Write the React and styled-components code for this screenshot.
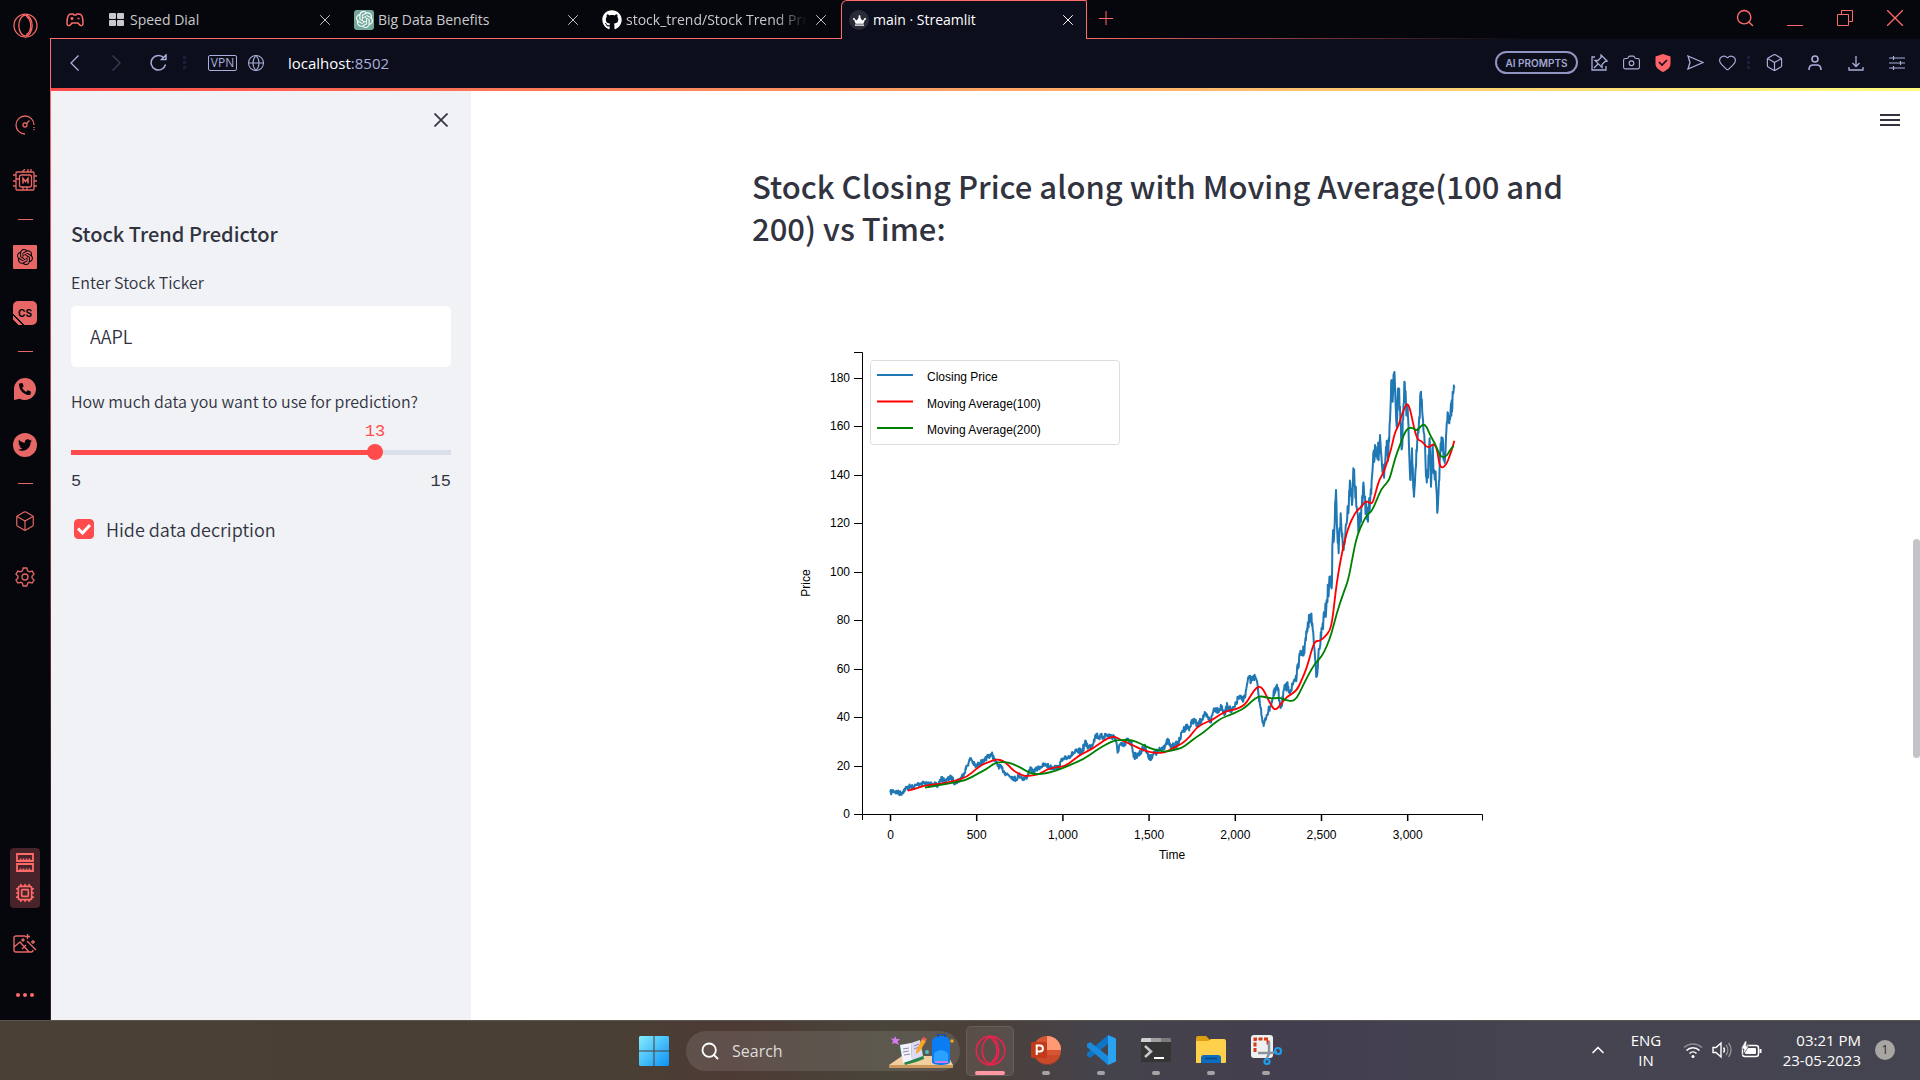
import React, { useState } from "react";
import styled, { createGlobalStyle, css } from "styled-components";
import { Box, Camera, Heart, Cpu, Globe, X, Search, ChevronUp } from "lucide-react";
import { FaGithub, FaTwitter, FaCrown, FaPhoneAlt } from "react-icons/fa";
import { SiOpenai } from "react-icons/si";

const coral = "#ff6b68";
const railCoral = "#e66765";
const lilac = "#a9aedb";
const ink = "#31333f";
const accent = "#ff4b4b";
const shellFont = '"Open Sans", "Noto Sans", sans-serif';
const pageFont = '"Noto Sans CJK JP", "Noto Sans", sans-serif';
const digitFont = '"Liberation Mono", monospace';

const GlobalStyle = createGlobalStyle`
  *, *::before, *::after { box-sizing: border-box; }
  body { margin: 0; background: #06070c; font-family: ${shellFont}; overflow: hidden; }
  button { padding: 0; border: 0; background: none; color: inherit; font: inherit; }
  h1, h2, p { margin: 0; }
  svg { flex: none; }
`;

const Desktop = styled.div`
  height: 100vh;
  display: grid;
  grid-template-rows: 1fr 60px;
`;

const Browser = styled.div`
  display: grid;
  grid-template-columns: 50px 1fr;
  min-height: 0;
  background: #06070c;
`;

/* ---------- left rail ---------- */

const Rail = styled.nav`
  display: flex;
  flex-direction: column;
  align-items: center;
  padding: 10px 0 2px;
  color: ${railCoral};
`;

const Logo = styled.button`
  display: flex;
  align-items: center;
  height: 30px;
  margin-bottom: 57px;
`;

const RailButton = styled.button`
  display: grid;
  place-items: center;
  width: 40px;
  height: ${(p) => p.$height || 56}px;
`;

const RailDash = styled.span`
  width: 15px;
  height: 20px;
  background: linear-gradient(${railCoral}, ${railCoral}) center / 15px 1px no-repeat;
`;

const RailTile = styled.span`
  display: grid;
  place-items: center;
  width: 24px;
  height: 24px;
  border-radius: ${(p) => p.$radius}px;
  background: ${railCoral};
  color: #06070c;
  font: 700 10px/24px Inter, sans-serif;
`;

const FoldedTile = styled(RailTile)`
  background: linear-gradient(45deg, #06070c 0 4px, ${railCoral} 4px 7px, #06070c 7px 8px, ${railCoral} 8px);
`;

const Monitor = styled.div`
  display: flex;
  flex-direction: column;
  align-items: center;
  justify-content: space-around;
  width: 30px;
  height: 60px;
  margin: auto 0 8px;
  border-radius: 4px;
  background: #48232a;
  color: ${coral};
`;

/* ---------- browser chrome ---------- */

const Window = styled.div`
  display: grid;
  grid-template-rows: 39px 49px 1fr;
  min-width: 0;
  min-height: 0;
`;

const TabStrip = styled.div`
  display: flex;
  align-items: stretch;
  padding-left: 11px;
  color: #c9c9cd;
  background: linear-gradient(90deg, ${coral} 55%, transparent 79%) bottom / 100% 1px no-repeat;
`;

const GameButton = styled.button`
  display: grid;
  place-items: center;
  width: 28px;
  margin-right: 8px;
  color: ${coral};
`;

const TabBox = styled.div`
  display: flex;
  align-items: center;
  gap: 4px;
  width: 248px;
  padding: 0 10px 0 9px;
  font-size: 14px;
  ${(p) =>
    p.$active &&
    css`
      width: 246px;
      padding: 0 8px 0 7px;
      color: #fff;
      background: #0c0e1b;
      border: 1px solid ${coral};
      border-bottom: 0;
      border-radius: 6px 2px 0 0;
    `}
`;

const TabIcon = styled.span`
  display: grid;
  place-items: center;
  flex: none;
  width: 20px;
  height: 20px;
  border-radius: ${(p) => p.$radius || 0};
  background: ${(p) => p.$bg || "transparent"};
  color: #fff;
`;

const TabName = styled.span`
  flex: 1;
  min-width: 0;
  white-space: nowrap;
  line-height: 20px;
  ${(p) => p.$fade && css`mask-image: linear-gradient(90deg, #000 82%, transparent);`}
`;

const IconButton = styled.button`
  display: grid;
  place-items: center;
  flex: none;
  width: ${(p) => p.$size || 20}px;
  height: ${(p) => p.$size || 20}px;
  color: ${(p) => p.$color || "inherit"};
`;

const WindowControls = styled.div`
  display: flex;
  gap: 30px;
  align-items: center;
  margin-left: auto;
  padding: 0 15px 3px 0;
  color: ${coral};
`;

const NewTab = styled.button`
  display: grid;
  place-items: center;
  width: 38px;
  padding-bottom: 3px;
  color: ${coral};
`;

const Toolbar = styled.div`
  display: flex;
  align-items: center;
  padding: 0 13px 2px;
  background: #0c0e1b;
  border-left: 1px solid ${coral};
  color: ${lilac};
`;

const NavButtons = styled.div`
  display: flex;
  gap: 22px;
`;

const Dots = styled.span`
  width: 3px;
  height: 14px;
  margin: ${(p) => p.$margin};
  background: repeating-linear-gradient(#18203c 0 3px, transparent 3px 5px);
`;

const Vpn = styled.button`
  width: 29px;
  height: 16px;
  margin-right: 9px;
  border: 1px solid ${lilac};
  border-radius: 2px;
  font-size: 12px;
  line-height: 14px;
`;

const Address = styled.input`
  width: 40px;
  flex: 1;
  border: 0;
  outline: 0;
  background: transparent;
`;

const AddressText = styled.label`
  display: flex;
  flex: 1;
  margin-left: 22px;
  color: #fff;
  font-size: 15px;
  line-height: 20px;
  span { color: ${lilac}; }
`;

const Prompts = styled.button`
  width: 83px;
  height: 23px;
  margin-right: 11px;
  border: 2px solid #8f94c0;
  border-radius: 12px;
  color: #a2a6d0;
  font: 600 10px/18px Inter, sans-serif;
`;

const ActionGroup = styled.div`
  display: flex;
  gap: ${(p) => p.$gap}px;
`;

/* ---------- page ---------- */

const Page = styled.div`
  display: grid;
  grid-template-columns: 420px 1fr;
  grid-template-rows: 3px 1fr;
  min-height: 0;
  border-left: 1px solid;
  border-image: linear-gradient(${coral}, #3a1c22 75%) 1;
  background: #fff;
  color: ${ink};
  font-family: ${pageFont};
`;

const Decoration = styled.div`
  grid-column: 1 / -1;
  background: linear-gradient(90deg, ${accent}, #fffd80);
`;

const Side = styled.aside`
  display: flex;
  flex-direction: column;
  padding: 17px 20px;
  background: #f0f2f6;
`;

const CloseRow = styled.div`
  display: flex;
  justify-content: flex-end;
  height: 24px;
  align-items: center;
`;

const SideTitle = styled.h2`
  margin-top: 88px;
  font-size: 20px;
  font-weight: 500;
  line-height: 28px;
`;

const FieldLabel = styled.label`
  margin-top: 21px;
  font-size: 16px;
  font-weight: 350;
  line-height: 26px;
`;

const TextField = styled.input`
  width: 100%;
  height: 61px;
  margin-top: 11px;
  padding: 0 19px 2px;
  border: 0;
  border-radius: 5px;
  outline: 0;
  background: #fff;
  color: ${ink};
  font: 350 18px ${pageFont};
`;

const SliderValue = styled.output`
  width: 40px;
  margin-top: 8px;
  transform: translateX(-50%);
  color: ${accent};
  text-align: center;
  font: 400 17px/20px ${digitFont};
`;

const Slider = styled.input`
  appearance: none;
  height: 16px;
  margin: 2px -8px 0;
  background: linear-gradient(90deg, ${accent} 80%, #dae0ea 80%) center / calc(100% - 16px) 5px no-repeat;
  &::-webkit-slider-thumb {
    appearance: none;
    width: 16px;
    height: 16px;
    border-radius: 50%;
    background: ${accent};
  }
`;

const Range = styled.div`
  display: flex;
  justify-content: space-between;
  margin-top: 12px;
  font: 400 17px/20px ${digitFont};
`;

const CheckRow = styled.label`
  display: flex;
  align-items: center;
  gap: 12px;
  margin: 25px 0 0 3px;
  font-size: 18px;
  font-weight: 350;
  line-height: 24px;
`;

const Check = styled.input`
  appearance: none;
  width: 20px;
  height: 20px;
  margin: 0;
  border-radius: 4px;
  border: 1px solid ${accent};
  &:checked {
    background: ${accent} url("data:image/svg+xml,%3Csvg xmlns='http://www.w3.org/2000/svg' viewBox='0 0 20 20'%3E%3Cpath d='M4 9.5l4.5 4.5L16 6' fill='none' stroke='%23fff' stroke-width='3'/%3E%3C/svg%3E") center / 20px no-repeat;
  }
`;

const Main = styled.main`
  display: grid;
  grid-template-columns: 1fr 7px;
  min-width: 0;
`;

const MainBody = styled.div`
  padding: 18px 12px 0 18px;
`;

const MenuRow = styled.div`
  display: flex;
  justify-content: flex-end;
`;

const Block = styled.section`
  max-width: 886px;
  margin: 34px auto 0;
`;

const Heading = styled.h1`
  padding-right: 20px;
  font-size: 31px;
  font-weight: 500;
  line-height: 42px;
`;

const Chart = styled.svg`
  display: block;
  margin-top: 91px;
  font-family: "Liberation Sans", Arial, sans-serif;
  font-size: 12px;
`;

const ScrollThumb = styled.div`
  align-self: start;
  height: 219px;
  margin-top: 448px;
  border-radius: 4px;
  background: #c3c4c8;
`;

/* ---------- taskbar ---------- */

const Taskbar = styled.footer`
  display: grid;
  grid-template-columns: 1fr auto 1fr;
  align-items: center;
  border-top: 1px solid #5c5650;
  background: linear-gradient(90deg, #4a4036 0, #4a3f34 33%, #4d3a35 38%, #49453a 46%, #4b4039 51%, #45434b 57%, #433e4f 68%, #454450 80%, #444450 100%);
  color: #fff;
`;

const Apps = styled.div`
  grid-column: 2;
  display: flex;
  align-items: center;
  padding-left: 12px;
`;

const StartButton = styled.button`
  display: grid;
  width: 30px;
  margin-right: 17px;
`;

const SearchBox = styled.label`
  display: flex;
  align-items: center;
  width: 274px;
  height: 40px;
  padding: 0 6px 0 14px;
  gap: 12px;
  border-radius: 20px;
  background: #ffffff1c;
  margin-right: 6px;
`;

const SearchInput = styled.input`
  flex: 1;
  width: 40px;
  padding: 0;
  border: 0;
  outline: 0;
  background: transparent;
  color: #fff;
  font: 16px ${shellFont};
  &::placeholder { color: #dedbd8; opacity: 1; }
`;

const AppButton = styled.button`
  display: grid;
  grid-template-rows: 39px 4px;
  row-gap: 1px;
  justify-items: center;
  align-items: center;
  width: ${(p) => (p.$active ? 48 : 55)}px;
  height: 50px;
  padding: 5px 0 0;
  margin-right: ${(p) => (p.$active ? 4 : 0)}px;
  border-radius: 5px;
  ${(p) => p.$active && css`background: #ffffff14; box-shadow: inset 0 0 0 1px #ffffff18;`}
  &::after {
    content: "";
    width: ${(p) => (p.$active ? 30 : 8)}px;
    height: 4px;
    border-radius: 2px;
    background: ${(p) => (p.$active ? "#ff98a4" : "#a5a3a6")};
  }
`;

const Tray = styled.div`
  display: flex;
  align-items: center;
  justify-content: flex-end;
  padding: 0 25px 2px 0;
  font-size: 15px;
  line-height: 20px;
`;

const Language = styled.button`
  width: 50px;
  margin: 0 12px 0 13px;
  text-align: center;
`;

const TrayIcons = styled.div`
  display: flex;
  gap: 9px;
`;

const Clock = styled.time`
  width: 99px;
  text-align: right;
`;

const Badge = styled.span`
  width: 20px;
  height: 20px;
  margin-left: 14px;
  border-radius: 50%;
  background: #a8a6a2;
  color: #2b2b2b;
  font-size: 12px;
  text-align: center;
`;

/* ---------- drawings ---------- */

const Line = ({ w = 24, h = w, vb = "0 0 24 24", sw = 1.3, children }) => (
  <svg width={w} height={h} viewBox={vb} fill="none" stroke="currentColor" strokeWidth={sw}>{children}</svg>
);

const OperaMark = ({ color, size = 25 }) => (
  <svg width={size} height={size} viewBox="0 0 30 30" fill="none" stroke={color} strokeWidth="1.500">
    <circle cx="15" cy="15" r="13.800" />
    <ellipse cx="15" cy="15" rx="8" ry="12.500" />
    <path d="M16 4c7 4 7 18 0 22" />
  </svg>
);

const Pad = () => (
  <Line w={18} h={14} vb="0 0 18 14" sw={1.5}>
    <path d="M5 1h2l1 1h2l1-1h2c3 0 4 4 4 9 0 4-3 3-5 0H6c-2 3-5 4-5 0 0-5 1-9 4-9z" />
    <path d="M4.500 5.500h3M6 4v3M11.500 5.500h2" />
  </Line>
);

const SpeedDial = () => (
  <svg width="15" height="13" viewBox="0 0 15 13" fill="#c9c9cd">
    <rect width="7" height="6" rx="1" /><rect x="8" width="7" height="6" rx="1" />
    <rect y="7" width="7" height="6" rx="1" /><rect x="8" y="7" width="7" height="6" rx="1" />
  </svg>
);

const GaugeIcon = () => (
  <Line w={20} vb="0 0 20 20">
    <path d="M10 19a9 9 0 1 1 9-9" />
    <path d="M19 12v1M19 14v1" />
    <circle cx="10" cy="10" r="2" /><path d="M11.500 8.500l3-3" />
  </Line>
);

const ChipIcon = () => (
  <Line>
    <rect x="3" y="3" width="18" height="18" rx="1" />
    <rect x="6.500" y="6" width="12" height="12" rx="2" />
    <path d="M10 14.500v-5l2.500 3 2.500-3v5" strokeWidth="1.600" />
    <path d="M0 6h3M0 12h3M0 17h3M21 7h3M21 12h3M21 17h3M9 3l3-3M15 3V0M18 3V0M10 18v3M14 18v3M6.500 10H3" />
  </Line>
);

const GearIcon = () => (
  <Line w={20} vb="0 0 20 20">
    <circle cx="10" cy="10" r="3" />
    <path d="M8.200 1h3.600l.8 2.900 1.800 1 2.800-.8 1.800 3.100-2 2v1.800l2 2-1.800 3.100-2.800-.8-1.800 1-.8 2.700H8.200l-.8-2.700-1.800-1-2.800.8L1 13l2-2V9.200l-2-2 1.800-3.100 2.800.8 1.800-1z" />
  </Line>
);

const WhatsIcon = () => (
  <svg width="24" height="24" viewBox="0 0 24 24">
    <path d="M12 1a11 11 0 1 1-5.200 20.700L1 23V12A11 11 0 0 1 12 1z" fill={railCoral} />
    <g transform="translate(6 6)" color="#06070c"><FaPhoneAlt size={12} /></g>
  </svg>
);

const RamIcon = () => (
  <Line w={18} h={20} vb="0 0 18 20" sw={1.8}>
    <path d="M1 1h16v7H1zM1 11h16v7H1zM4.500 8V5.500M7.500 8V5.500M10.500 8V5.500M13.500 8V5.500M4.500 18v-2.500M7.500 18v-2.500M10.500 18v-2.500M13.500 18v-2.500" />
  </Line>
);

const PictureIcon = () => (
  <Line w={24} h={20} vb="0 0 24 20" sw={1.4}>
    <path d="M12 2H3a2 2 0 0 0-2 2v12a2 2 0 0 0 2 2h15a2 2 0 0 0 2-2M1 13l6-5 9 10M9 15l4-4M14 7l9 9M14.500 0v5M12 2.500h5M20 6v4M18 8h4" />
    <circle cx="10" cy="6" r="1" fill="currentColor" />
  </Line>
);

const PinIcon = () => (
  <Line w={18} vb="0 0 18 18" sw={1.3}>
    <path d="M5 3H2v13h14v-4M11 1l6 6-2 .5-3 3 0 3-7-7h3l3-3zM8 10l-4 4" />
  </Line>
);

const ShieldIcon = () => (
  <svg width="16" height="18" viewBox="0 0 16 18">
    <path d="M8 0l7.500 2.500V10c0 4-4.500 6.500-7.500 8-3-1.500-7.500-4-7.500-8V2.500z" fill="#ff6468" />
    <path d="M4 8l3 3 5-5" fill="none" stroke="#0c0e1b" strokeWidth="1.600" />
  </svg>
);

const WindowsLogo = () => (
  <svg width="30" height="30" viewBox="0 0 30 30">
    <defs><linearGradient id="win" x1="0" y1="0" x2="1" y2="1"><stop stopColor="#84edff" /><stop offset="1" stopColor="#0c91f5" /></linearGradient></defs>
    <path d="M1 0h13.500v14.500H0V1zM15.500 0H29l1 1v13.500H15.500zM0 15.500h14.500V30H1l-1-1zM15.500 15.500H30V29l-1 1H15.500z" fill="url(#win)" />
  </svg>
);

const SchoolArt = () => (
  <svg width="65" height="34" viewBox="0 0 65 34">
    <path d="M0 31l13-9h46l5 9z" fill="#f3cfa0" /><path d="M0 31h64v3H0z" fill="#c9975c" />
    <path d="M43 8c0-8 18-8 18 0v20c0 4-18 4-18 0z" fill="#0b7df2" /><path d="M49 3V0h7v3" fill="none" stroke="#1450b0" strokeWidth="2" />
    <path d="M45 20c3-5 11-5 14 0v8H45z" fill="#2ba1ff" /><path d="M46 28h13" stroke="#c77cf0" strokeWidth="2" />
    <path d="M10 13l11-2 4-1 7-3 3 18-8 3-11 3z" fill="#25864a" /><path d="M11 11l11-2 1 17-9 3z" fill="#f4f2ff" /><path d="M22 9l9-3 3 16-11 4z" fill="#dedaf5" />
    <path d="M14 15l6-1M14 18l6-1M15 21l6-1M25 12l5-2M25 15l5-2" stroke="#8d88a6" />
    <path d="M27 17l6-12 4 2-6 10-4 3z" fill="#f8a528" /><path d="M33 5l1-2 4 2-1 2z" fill="#f35a55" />
    <path d="M6 2l1.500 3L11 5 8.500 7.500 10 11 6 9 3 10l1-3-2-3 3 1z" fill="#d77af2" />
    <circle cx="38" cy="18" r="2" fill="#4bc0c8" /><circle cx="63" cy="7" r="1.800" fill="#f0a81c" />
  </svg>
);

const PowerPoint = () => (
  <svg width="30" height="30" viewBox="0 0 30 30">
    <circle cx="16" cy="15" r="14" fill="#d65532" /><path d="M16 1a14 14 0 0 1 14 14H16z" fill="#ff9a75" /><path d="M3 20h27a14 14 0 0 1-27 0z" fill="#bd3d20" opacity=".5" />
    <rect y="7" width="16" height="16" rx="1.500" fill="#c13b1b" />
    <path d="M5.700 20v-9.500h3.200a3 3 0 0 1 0 6H6" fill="none" stroke="#fff" strokeWidth="2" />
  </svg>
);

const CodeIcon = () => (
  <svg width="30" height="30" viewBox="0 0 30 30">
    <path d="M22 0l8 3.500v23L22 30z" fill="#29a3f0" />
    <path d="M22 0v9L4 23l-3-2v-3z" fill="#0f74c4" /><path d="M22 30v-9L4 7 1 9v3z" fill="#1a8bdc" />
  </svg>
);

const TerminalIcon = () => (
  <svg width="30" height="24" viewBox="0 0 30 24">
    <rect width="30" height="24" rx="1.500" fill="#353535" /><path d="M0 1.500A1.500 1.500 0 0 1 1.500 0H10v4H0z" fill="#d0d0d0" />
    <path d="M10 0h10v4H10z" fill="#a0a0a0" /><path d="M20 0h8.500A1.500 1.500 0 0 1 30 1.500V4H20z" fill="#7b7b7b" />
    <path d="M4 8l6 5.500L4 19" fill="none" stroke="#c9c9c9" strokeWidth="2.500" /><path d="M13 20h10" stroke="#fff" strokeWidth="2" />
  </svg>
);

const FolderIcon = () => (
  <svg width="30" height="28" viewBox="0 0 30 28">
    <path d="M0 2a2 2 0 0 1 2-2h8l4 4v6H0z" fill="#e09f12" /><path d="M0 5h12l3-2h13a2 2 0 0 1 2 2v21a1 1 0 0 1-1 1H0z" fill="#ffd04c" />
    <path d="M5 27v-5a3 3 0 0 1 3-3h14a3 3 0 0 1 3 3v5z" fill="#0d6cc0" /><path d="M9 22.500h12" stroke="#0a4580" strokeWidth="1.500" />
  </svg>
);

const SnipIcon = () => (
  <svg width="32" height="30" viewBox="0 0 32 30">
    <rect x="1" width="22" height="23" rx="3" fill="#eef0f2" /><path d="M5 17V4h13v6" fill="none" stroke="#d43c16" strokeWidth="3" strokeDasharray="4 1.500" />
    <path d="M19 7v12l-3 6M8 18h12l7-1" stroke="#8b949c" strokeWidth="2.500" fill="none" />
    <circle cx="28" cy="16" r="3" fill="none" stroke="#209be8" strokeWidth="2.200" /><circle cx="17" cy="26.500" r="2.500" fill="none" stroke="#209be8" strokeWidth="2.200" />
  </svg>
);

/* ---------- chart data, three units to a pixel ---------- */

const closeEarly = [151,398,160,392,170,397,183,400,195,388,205,380,220,382,235,372,250,368,262,374,280,372,293,378,303,356,315,364,333,352,345,368,362,356,372,340,380,320,387,305,393,295,400,310,408,320,420,308,433,305,440,292,455,282,463,298,472,315,485,325,495,338,505,345,515,350,528,358,537,345,553,358,562,348,570,328,580,335,590,328,600,320,618,314,630,322,645,322,655,325,662,305,672,298,685,290,700,280,712,275,725,275,737,248,745,262,755,258,762,238,768,225,780,232,790,230,800,224,812,230,822,228,828,245,833,278,838,255,850,258,862,240,875,250,882,288,895,285,905,270,917,262,927,297,940,282,955,275,968,262,975,255,985,243,992,262,1005,258,1020,240,1027,212,1040,200,1050,202,1058,180,1065,185,1073,198,1085,178,1093,165,1103,172,1112,185,1122,145,1135,150,1145,138,1153,165,1162,135,1175,155,1185,140,1195,112,1205,118,1215,112,1220,80,1228,48,1233,65,1240,48,1250,62,1255,100,1262,145,1271,198,1280,165,1290,140,1300,110,1312,82,1318,120];
const closeLate = [4,1100,10,1055,25,1040,35,1050,42,1020,50,1010,55,970,65,935,72,935,80,880,88,835,93,830,97,850,101,900,105,950,110,1010,115,950,120,920,128,850,135,830,140,780,147,740,152,710,155,745,158,600,163,570,168,450,172,580,176,640,182,520,187,580,191,630,197,560,204,510,211,430,216,495,220,385,225,440,230,500,235,575,240,520,243,545,249,445,254,470,259,520,265,515,270,490,275,420,280,340,290,350,297,330,300,285,305,360,311,400,318,320,325,340,330,240,335,120,338,185,342,100,346,170,350,260,355,145,360,200,366,325,373,125,378,190,384,230,388,350,392,420,396,325,402,470,408,380,413,290,418,230,423,155,428,230,434,310,438,410,443,415,449,295,453,440,457,330,462,390,468,430,473,510,478,420,482,310,487,300,493,360,498,290,504,220,508,250,513,190,516,215,518,155,523,145];
const ma100Early = [203,392,230,385,255,376,300,372,340,364,380,352,410,325,430,312,450,305,470,297,490,303,505,315,520,332,545,346,565,349,600,342,620,328,645,322,675,319,700,300,720,285,760,265,790,242,812,231,825,230,840,238,860,248,880,256,900,267,930,277,950,279,975,278,1000,263,1025,252,1050,230,1070,202,1095,188,1115,181,1130,170,1150,158,1170,150,1185,149,1205,140,1220,128,1235,102,1250,82,1260,80,1270,88,1285,120,1297,142,1305,149,1315,143];
const ma100Late = [0,1095,20,1070,50,1053,65,1020,80,985,95,930,105,903,120,903,135,890,150,872,157,840,163,790,170,730,180,670,190,620,200,580,210,550,220,530,230,512,245,500,257,482,265,487,277,492,285,465,297,420,310,400,320,370,333,330,345,275,355,260,365,225,375,200,382,190,390,205,400,255,412,300,425,302,440,322,450,320,462,310,472,330,478,375,487,385,500,372,510,345,517,325,523,302];
const ma200Early = [255,383,300,375,340,368,380,360,410,343,440,327,460,312,475,307,500,306,520,313,545,324,565,338,590,343,620,340,660,328,690,315,730,298,770,270,800,252,825,241,850,240,875,240,900,250,930,265,960,273,980,275,1000,270,1025,264,1045,250,1070,230,1090,218,1120,192,1145,174,1170,165,1195,154,1215,143,1235,124,1255,109,1270,110,1290,115,1305,115];
const ma200Late = [0,1073,15,1080,37,1084,50,1075,65,1045,85,1005,105,970,125,950,140,920,155,880,170,820,190,760,205,720,218,650,228,600,240,565,260,525,275,515,290,480,305,445,320,430,330,415,345,355,360,315,375,275,388,262,400,265,410,272,420,262,430,252,440,260,450,285,465,310,478,343,487,352,500,349,510,330,521,317];

const pairs = (flat, dx = 0, dy = 0) => {
  const out = [];
  for (let i = 0; i < flat.length; i += 2) out.push([flat[i] + dx, flat[i + 1] + dy]);
  return out;
};
const series = (early, late) => [...pairs(early), ...pairs(late, 1320, -960)];

const withSwings = (points) => {
  let seed = 7;
  const rand = () => ((seed = (seed * 16807) % 2147483647) / 2147483647) - 0.5;
  const out = [];
  points.forEach(([x, y], i) => {
    out.push([x, y]);
    const next = points[i + 1];
    if (!next) return;
    const steps = Math.max(1, Math.round((next[0] - x) / 1.2));
    for (let s = 1; s < steps; s++) {
      const t = s / steps;
      const px = x + (next[0] - x) * t;
      const swing = px < 700 ? 15 : px < 1300 ? 20 : px < 1440 ? 34 : 60;
      out.push([px, y + (next[1] - y) * t + rand() * swing]);
    }
  });
  return out;
};

const smooth = (points) => {
  let d = `M${points[0]}`;
  for (let i = 1; i < points.length - 1; i++) {
    const [x, y] = points[i];
    const [nx, ny] = points[i + 1];
    d += `Q${x} ${y} ${(x + nx) / 2} ${(y + ny) / 2}`;
  }
  return `${d}L${points[points.length - 1]}`;
};

const legend = [["Closing Price", "#1f77b4"], ["Moving Average(100)", "red"], ["Moving Average(200)", "green"]];

const PriceChart = () => (
  <Chart width="760" height="530" viewBox="0 0 760 530" role="img" aria-label="Closing price and moving averages over time">
    <g fill="none" stroke="#000">
      <path d="M102 12.500h8.500V480M102 474.500h628.500v6" />
      {[1, 2, 3, 4, 5, 6, 7, 8, 9].map((n) => <path key={n} d={`M102 ${Math.round(474 - n * 48.44)}.5h8`} />)}
      {[0, 1, 2, 3, 4, 5, 6].map((n) => <path key={n} strokeWidth="1.500" d={`M${138.5 + n * 86.2} 475v6`} />)}
    </g>
    {[0, 1, 2, 3, 4, 5, 6, 7, 8, 9].map((n) => (
      <text key={n} x="98" y={Math.round(478 - n * 48.44)} textAnchor="end">{n * 20}</text>
    ))}
    {[0, 1, 2, 3, 4, 5, 6].map((n) => (
      <text key={n} x={138.5 + n * 86.2} y="499" textAnchor="middle">{(n * 500).toLocaleString("en-US")}</text>
    ))}
    <text x="420" y="519" textAnchor="middle">Time</text>
    <text transform="translate(58 243) rotate(-90)" textAnchor="middle">Price</text>
    <g transform="translate(88 320) scale(.33333)" fill="none" strokeLinejoin="round">
      <polyline points={withSwings(series(closeEarly, closeLate)).join(" ")} stroke="#1f77b4" strokeWidth="6" />
      <path d={smooth(series(ma100Early, ma100Late))} stroke="red" strokeWidth="5.500" />
      <path d={smooth(series(ma200Early, ma200Late))} stroke="green" strokeWidth="5.500" />
    </g>
    <rect x="118.500" y="20.500" width="249" height="84" rx="3" fill="#fff" stroke="#ddd" />
    {legend.map(([name, color], i) => (
      <g key={name}>
        <path d={`M125 ${35 + i * 26.5}h36`} stroke={color} strokeWidth="2" />
        <text x="175" y={41 + i * 26.5}>{name}</text>
      </g>
    ))}
  </Chart>
);

/* ---------- composition ---------- */

const Tab = ({ icon, name, active, fade, bg, radius }) => (
  <TabBox $active={active}>
    <TabIcon $bg={bg} $radius={radius}>{icon}</TabIcon>
    <TabName $fade={fade}>{name}</TabName>
    <IconButton aria-label={`Close ${name}`}><X size={18} strokeWidth={1.3} /></IconButton>
  </TabBox>
);

export default function App() {
  const [years, setYears] = useState(13);
  return (
    <Desktop>
      <GlobalStyle />
      <Browser>
        <Rail>
          <Logo aria-label="Opera menu"><OperaMark color={coral} /></Logo>
          <RailButton aria-label="GX Control"><GaugeIcon /></RailButton>
          <RailButton aria-label="Mods"><ChipIcon /></RailButton>
          <RailDash />
          <RailButton aria-label="ChatGPT"><RailTile $radius={1}><SiOpenai size={16} /></RailTile></RailButton>
          <RailButton aria-label="ChatSonic"><FoldedTile $radius={5}>CS</FoldedTile></RailButton>
          <RailDash />
          <RailButton aria-label="WhatsApp"><WhatsIcon /></RailButton>
          <RailButton aria-label="Twitter"><RailTile $radius={12}><FaTwitter size={14} /></RailTile></RailButton>
          <RailDash />
          <RailButton aria-label="Extensions"><Box size={22} strokeWidth={1.3} /></RailButton>
          <RailButton aria-label="Settings"><GearIcon /></RailButton>
          <Monitor><RamIcon /><Cpu size={20} strokeWidth={2} /></Monitor>
          <RailButton aria-label="Wallpaper"><PictureIcon /></RailButton>
          <RailButton aria-label="More" $height={46}>
            <svg width="18" height="4" fill={coral}><circle cx="2" cy="2" r="2" /><circle cx="9" cy="2" r="2" /><circle cx="16" cy="2" r="2" /></svg>
          </RailButton>
        </Rail>

        <Window>
          <TabStrip>
            <GameButton aria-label="GX Corner"><Pad /></GameButton>
            <Tab icon={<SpeedDial />} name="Speed Dial" />
            <Tab icon={<SiOpenai size={17} />} bg="#74aa9c" radius="3px" name="Big Data Benefits" />
            <Tab icon={<FaGithub size={20} />} name="stock_trend/Stock Trend Pre" fade />
            <Tab icon={<FaCrown size={13} />} bg="#292b37" radius="50%" name="main · Streamlit" active />
            <NewTab aria-label="New tab"><Line w={14} vb="0 0 14 14" sw={1}><path d="M7 0v14M0 7.500h14" /></Line></NewTab>
            <WindowControls>
              <IconButton aria-label="Search tabs"><Search size={20} strokeWidth={1.7} /></IconButton>
              <IconButton aria-label="Minimize"><Line w={16} vb="0 0 16 16" sw={1}><path d="M0 15.500h16" /></Line></IconButton>
              <IconButton aria-label="Restore"><Line w={16} vb="0 0 16 16" sw={1}><path d="M.5 4.500h11v11H.5zM4.500 4.500v-4h11v11h-4" /></Line></IconButton>
              <IconButton aria-label="Close window"><Line w={16} vb="0 0 16 16" sw={1.3}><path d="M0 0l16 16M16 0L0 16" /></Line></IconButton>
            </WindowControls>
          </TabStrip>

          <Toolbar>
            <NavButtons>
              <IconButton aria-label="Back"><Line w={9} h={16} vb="0 0 9 16"><path d="M8.500.5L1 8l7.500 7.500" /></Line></IconButton>
              <IconButton aria-label="Forward" $color="#3c3f59"><Line w={9} h={16} vb="0 0 9 16"><path d="M.5.5L8 8 .5 15.500" /></Line></IconButton>
              <IconButton aria-label="Reload"><Line w={17} vb="0 0 17 17" sw={1.5}><path d="M15.500 10.500A7.300 7.300 0 1 1 14 4M11.500 5.500h4.500V1z" /></Line></IconButton>
            </NavButtons>
            <Dots $margin="0 22px 0 15px" />
            <Vpn>VPN</Vpn>
            <IconButton aria-label="Site information"><Globe size={18} strokeWidth={1.4} /></IconButton>
            <AddressText>localhost<span>:8502</span><Address aria-label="Address" /></AddressText>
            <Prompts>AI PROMPTS</Prompts>
            <ActionGroup $gap={12}>
              <IconButton aria-label="Pin"><PinIcon /></IconButton>
              <IconButton aria-label="Snapshot"><Camera size={19} strokeWidth={1.4} /></IconButton>
              <IconButton aria-label="Ad blocker"><ShieldIcon /></IconButton>
              <IconButton aria-label="Flow"><Line w={17} h={15} vb="0 0 17 15"><path d="M1 1l15 6.500L1 14l2-6.500z" /></Line></IconButton>
              <IconButton aria-label="Bookmark"><Heart size={19} strokeWidth={1.4} /></IconButton>
            </ActionGroup>
            <Dots $margin="0 14px 0 10px" />
            <ActionGroup $gap={21}>
              <IconButton aria-label="Extensions"><Box size={19} strokeWidth={1.5} /></IconButton>
              <IconButton aria-label="Profile"><Line w={14} h={16} vb="0 0 14 16" sw={1.6}><circle cx="7" cy="4" r="3" /><path d="M1 15c0-3 1-5 4-5M13 15c0-3-1-5-4-5M4 10h6" /></Line></IconButton>
              <IconButton aria-label="Downloads"><Line w={16} vb="0 0 16 16" sw={1.3}><path d="M8 1v10M4.500 8L8 11.500 11.500 8M1 12v3h14v-3" /></Line></IconButton>
              <IconButton aria-label="Easy setup"><Line w={16} vb="0 0 16 16" sw={1.2}><path d="M0 3h16M0 8h16M0 13h16M4.500 1v4M11.500 6v4M4.500 11v4" /></Line></IconButton>
            </ActionGroup>
          </Toolbar>

          <Page>
            <Decoration />
            <Side>
              <CloseRow><IconButton aria-label="Close sidebar"><Line w={14} vb="0 0 14 14" sw={1.7}><path d="M.5.5l13 13M13.500.5l-13 13" /></Line></IconButton></CloseRow>
              <SideTitle>Stock Trend Predictor</SideTitle>
              <FieldLabel htmlFor="ticker">Enter Stock Ticker</FieldLabel>
              <TextField id="ticker" defaultValue="AAPL" />
              <FieldLabel htmlFor="years">How much data you want to use for prediction?</FieldLabel>
              <SliderValue htmlFor="years" style={{ marginLeft: `${(years - 5) * 10}%` }}>{years}</SliderValue>
              <Slider id="years" type="range" min="5" max="15" value={years} onChange={(e) => setYears(+e.target.value)} />
              <Range><span>5</span><span>15</span></Range>
              <CheckRow><Check type="checkbox" defaultChecked />Hide data decription</CheckRow>
            </Side>
            <Main>
              <MainBody>
                <MenuRow><IconButton aria-label="Main menu" $size={22}><Line w={20} h={14} vb="0 0 20 14" sw={2}><path d="M0 2h20M0 7h20M0 12h20" /></Line></IconButton></MenuRow>
                <Block>
                  <Heading>Stock Closing Price along with Moving Average(100 and 200) vs Time:</Heading>
                  <PriceChart />
                </Block>
              </MainBody>
              <ScrollThumb />
            </Main>
          </Page>
        </Window>
      </Browser>

      <Taskbar>
        <Apps>
          <StartButton aria-label="Start"><WindowsLogo /></StartButton>
          <SearchBox>
            <Search size={20} strokeWidth={2.2} />
            <SearchInput placeholder="Search" aria-label="Search" />
            <SchoolArt />
          </SearchBox>
          <AppButton $active aria-label="Opera GX"><OperaMark color="#f0204e" size={31} /></AppButton>
          <AppButton aria-label="PowerPoint"><PowerPoint /></AppButton>
          <AppButton aria-label="Visual Studio Code"><CodeIcon /></AppButton>
          <AppButton aria-label="Terminal"><TerminalIcon /></AppButton>
          <AppButton aria-label="File Explorer"><FolderIcon /></AppButton>
          <AppButton aria-label="Snipping Tool"><SnipIcon /></AppButton>
        </Apps>
        <Tray>
          <IconButton aria-label="Hidden icons"><ChevronUp size={20} strokeWidth={2} /></IconButton>
          <Language>ENG<br />IN</Language>
          <TrayIcons>
            <Line w={20} h={18} vb="0 0 20 18" sw={1.5}><path d="M1 6.500a13 13 0 0 1 18 0" opacity=".4" /><path d="M3.500 9.500a9 9 0 0 1 13 0M6.500 12.500a5 5 0 0 1 7 0" /><circle cx="10" cy="15.500" r="1.500" fill="currentColor" stroke="none" /></Line>
            <Line w={20} h={18} vb="0 0 20 18" sw={1.4}><path d="M1 6.500h3l5-4.500v14l-5-4.500H1z" /><path d="M11.500 6.500a4 4 0 0 1 0 5" /><path d="M14 4a8 8 0 0 1 0 10M16.500 2a11 11 0 0 1 0 14" opacity=".4" /></Line>
            <svg width="21" height="18" viewBox="0 0 21 18"><rect x="1.500" y="4.500" width="16" height="11" rx="2.500" fill="none" stroke="#fff" strokeWidth="1.500" /><rect x="4" y="7" width="11" height="6" rx="1" fill="#fff" /><path d="M18.500 8h2v4h-2z" fill="#fff" /><path d="M4 0L0 8h3l-1 6 6-9H5l1-5z" fill="#fff" stroke="#454450" strokeWidth=".7" /></svg>
          </TrayIcons>
          <Clock>03:21 PM<br />23-05-2023</Clock>
          <Badge>1</Badge>
        </Tray>
      </Taskbar>
    </Desktop>
  );
}
